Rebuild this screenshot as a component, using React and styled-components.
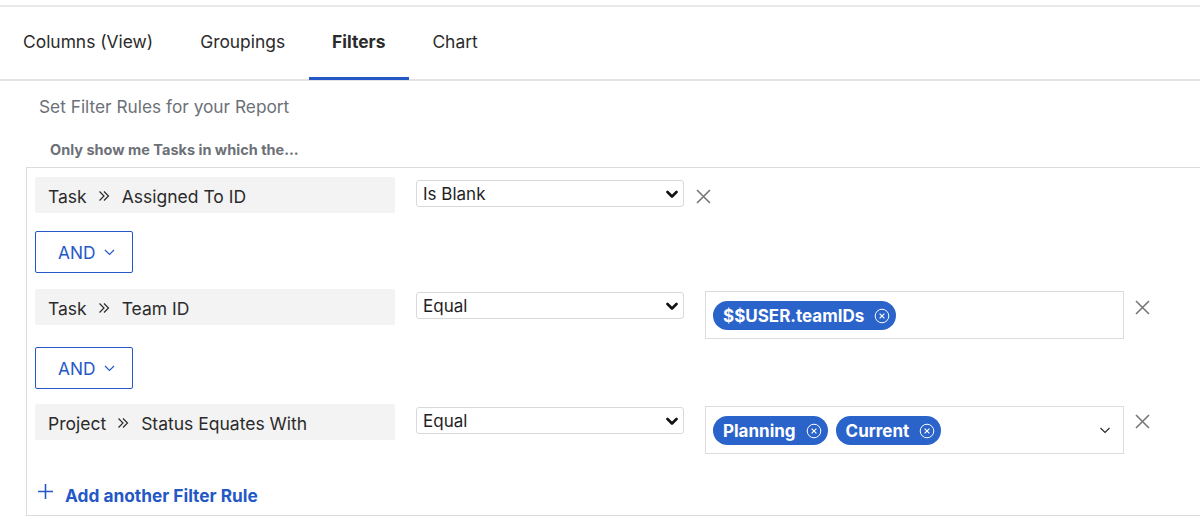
import React from "react";
import styled, { createGlobalStyle } from "styled-components";

const Global = createGlobalStyle`
  html, body { margin: 0; padding: 0; background: #fff; }
  body { font-family: Inter, "Liberation Sans", Arial, sans-serif; color: #2b2b2b; }
  * { box-sizing: border-box; }
`;

const Page = styled.div`
  width: 1200px;
  height: 525px;
  padding-top: 5px;
  overflow: hidden;
`;

const TabBar = styled.div`
  display: flex;
  height: 76px;
  border-top: 2px solid #e8e8e8;
  border-bottom: 2px solid #e3e3e3;
`;

const Tab = styled.div`
  position: relative;
  display: flex;
  align-items: center;
  padding: 0 24px 3px 23px;
  font-size: 17.4px;
  color: #2b2b2b;
  font-weight: ${(p) => (p.$active ? 700 : 400)};
  &::after {
    content: "";
    display: ${(p) => (p.$active ? "block" : "none")};
    position: absolute;
    left: 0;
    right: 0;
    bottom: -1px;
    height: 3px;
    background: #2458c6;
  }
`;

const Content = styled.div`
  padding-top: 16px;
`;

const Title = styled.div`
  margin-left: 39px;
  font-size: 17.3px;
  color: #6c7077;
  line-height: 20px;
`;

const Subtitle = styled.div`
  margin: 24px 0 0 50px;
  font-size: 14.5px;
  font-weight: 700;
  color: #6c7077;
  line-height: 18px;
`;

const Panel = styled.div`
  margin: 8px 0 0 26px;
  border-top: 1px solid #dcdcdc;
  border-left: 1px solid #dcdcdc;
  border-bottom: 1px solid #dcdcdc;
  padding: 9px 0 0 8px;
  height: 349px;
`;

const RuleRow = styled.div`
  display: flex;
  align-items: flex-start;
  margin-bottom: ${(p) => p.$mb}px;
`;

const Field = styled.div`
  width: 360px;
  height: 36px;
  background: #f3f3f3;
  border-radius: 2px;
  display: flex;
  align-items: center;
  padding: 2px 0 0 13px;
  font-size: 17.5px;
  color: #2b2b2b;
`;

const Sep = styled.span`
  display: inline-flex;
  margin: 0 12px 0 11px;
`;

const Select = styled.div`
  margin: 3px 0 0 21px;
  width: 268px;
  height: 27px;
  border: 1px solid #d9d9d9;
  border-radius: 3px;
  display: flex;
  align-items: center;
  justify-content: space-between;
  padding: 1px 5px 0 6px;
  font-size: 17px;
  color: #1f1f1f;
`;

const RemoveBtn = styled.div`
  width: 20px;
  height: 20px;
  display: flex;
  align-items: center;
  justify-content: center;
  margin-top: ${(p) => p.$mt}px;
  margin-left: ${(p) => p.$ml}px;
`;

const ValueBox = styled.div`
  margin: 2px 0 0 21px;
  width: 419px;
  height: 48px;
  border: 1px solid #dcdcdc;
  display: flex;
  align-items: center;
  padding: 1px 12px 0 7px;
  gap: 8px;
`;

const Tag = styled.div`
  height: 29px;
  border-radius: 15px;
  background: #2a63c9;
  color: #fff;
  font-weight: 700;
  font-size: 17px;
  display: flex;
  align-items: center;
  padding: 0 6px 0 10px;
  gap: 10px;
`;

const Spacer = styled.div`
  flex: 1;
`;

const AndButton = styled.div`
  width: 98px;
  height: 42px;
  border: 1px solid #2458c6;
  border-radius: 2px;
  display: flex;
  align-items: center;
  padding: 1px 0 0 22px;
  gap: 9px;
  color: #2458c6;
  font-size: 17.3px;
  margin-bottom: ${(p) => p.$mb}px;
`;

const AddRule = styled.div`
  display: flex;
  align-items: flex-start;
  gap: 12px;
  margin: 32px 0 0 3px;
  color: #2458c6;
  font-weight: 700;
  font-size: 17.3px;
  line-height: 20px;
`;

const PlusWrap = styled.span`
  display: inline-flex;
  margin-top: -2px;
`;

const DoubleChevron = () => (
  <svg width="12" height="12" viewBox="0 0 12 12" fill="none" stroke="#2b2b2b" strokeWidth="1.2">
    <path d="M1.5 1.5 L6 6 L1.5 10.5" />
    <path d="M6 1.5 L10.5 6 L6 10.5" />
  </svg>
);

const SelectChevron = () => (
  <svg width="12" height="9" viewBox="0 0 12 9" fill="none" stroke="#111" strokeWidth="2.6" strokeLinecap="round" strokeLinejoin="round">
    <path d="M1.5 2 L6 6.5 L10.5 2" />
  </svg>
);

const ThinChevron = ({ color = "#2b2b2b", w = 11 }) => (
  <svg width={w} height="7" viewBox="0 0 11 7" fill="none" stroke={color} strokeWidth="1.2">
    <path d="M1 1 L5.5 5.5 L10 1" />
  </svg>
);

const XIcon = () => (
  <svg width="15" height="15" viewBox="0 0 15 15" fill="none" stroke="#777" strokeWidth="1.6">
    <path d="M1 1 L14 14 M14 1 L1 14" />
  </svg>
);

const CircleX = () => (
  <svg width="16" height="16" viewBox="0 0 16 16" fill="none" stroke="#fff" strokeWidth="1">
    <circle cx="8" cy="8" r="6.8" />
    <path d="M5.6 5.6 L10.4 10.4 M10.4 5.6 L5.6 10.4" strokeWidth="1.2" />
  </svg>
);

const Plus = () => (
  <svg width="15" height="15" viewBox="0 0 15 15" fill="none" stroke="#2458c6" strokeWidth="1.6">
    <path d="M7.5 0 V15 M0 7.5 H15" />
  </svg>
);

const FieldLabel = ({ obj, name }) => (
  <Field>
    {obj}
    <Sep>
      <DoubleChevron />
    </Sep>
    {name}
  </Field>
);

export default function App() {
  return (
    <Page>
      <Global />
      <TabBar>
        <Tab>Columns (View)</Tab>
        <Tab>Groupings</Tab>
        <Tab $active>Filters</Tab>
        <Tab>Chart</Tab>
      </TabBar>
      <Content>
        <Title>Set Filter Rules for your Report</Title>
        <Subtitle>Only show me Tasks in which the...</Subtitle>
        <Panel>
          <RuleRow $mb={18}>
            <FieldLabel obj="Task" name="Assigned To ID" />
            <Select>
              Is Blank
              <SelectChevron />
            </Select>
            <RemoveBtn $mt={9} $ml={9}>
              <XIcon />
            </RemoveBtn>
          </RuleRow>
          <AndButton $mb={16}>
            AND
            <ThinChevron color="#2458c6" />
          </AndButton>
          <RuleRow $mb={8}>
            <FieldLabel obj="Task" name="Team ID" />
            <Select>
              Equal
              <SelectChevron />
            </Select>
            <ValueBox>
              <Tag>
                $$USER.teamIDs
                <CircleX />
              </Tag>
            </ValueBox>
            <RemoveBtn $mt={8} $ml={8}>
              <XIcon />
            </RemoveBtn>
          </RuleRow>
          <AndButton $mb={15}>
            AND
            <ThinChevron color="#2458c6" />
          </AndButton>
          <RuleRow $mb={0}>
            <FieldLabel obj="Project" name="Status Equates With" />
            <Select>
              Equal
              <SelectChevron />
            </Select>
            <ValueBox>
              <Tag>
                Planning
                <CircleX />
              </Tag>
              <Tag>
                Current
                <CircleX />
              </Tag>
              <Spacer />
              <ThinChevron w={12} />
            </ValueBox>
            <RemoveBtn $mt={7} $ml={8}>
              <XIcon />
            </RemoveBtn>
          </RuleRow>
          <AddRule>
            <PlusWrap>
              <Plus />
            </PlusWrap>
            Add another Filter Rule
          </AddRule>
        </Panel>
      </Content>
    </Page>
  );
}
